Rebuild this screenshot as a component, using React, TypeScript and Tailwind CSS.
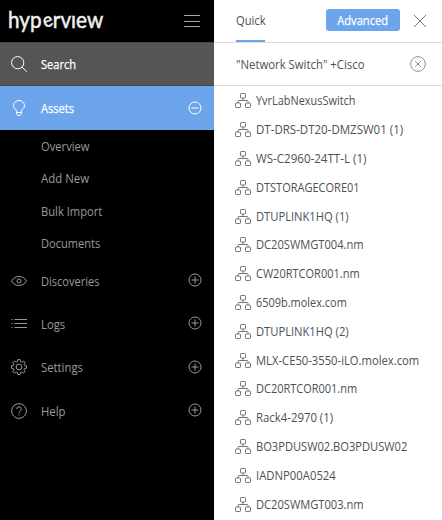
import type { ReactNode } from "react";

const results: [string, string][] = [
  ["YvrLabNexusSwitch", "scale-x-[0.84]"],
  ["DT-DRS-DT20-DMZSW01 (1)", "scale-x-[0.885]"],
  ["WS-C2960-24TT-L (1)", "scale-x-[0.89]"],
  ["DTSTORAGECORE01", "scale-x-[0.847]"],
  ["DTUPLINK1HQ (1)", "scale-x-[0.86]"],
  ["DC20SWMGT004.nm", "scale-x-[0.857]"],
  ["CW20RTCOR001.nm", "scale-x-[0.848]"],
  ["6509b.molex.com", "scale-x-[0.842]"],
  ["DTUPLINK1HQ (2)", "scale-x-[0.86]"],
  ["MLX-CE50-3550-iLO.molex.com", "scale-x-[0.864]"],
  ["DC20RTCOR001.nm", "scale-x-[0.845]"],
  ["Rack4-2970 (1)", "scale-x-[0.874]"],
  ["BO3PDUSW02.BO3PDUSW02", "scale-x-[0.856]"],
  ["IADNP00A0524", "scale-x-[0.87]"],
  ["DC20SWMGT003.nm", "scale-x-[0.857]"],
];

function Icon({ size = 16, className = "", children }: { size?: number; className?: string; children: ReactNode }) {
  return (
    <svg width={size} height={size} viewBox={`0 0 ${size} ${size}`} fill="none" stroke="currentColor" strokeWidth="1" className={`shrink-0 ${className}`}>
      {children}
    </svg>
  );
}

function Label({ text, fit }: { text: string; fit: string }) {
  return <span className={`origin-left whitespace-nowrap ${fit}`}>{text}</span>;
}

function Toggle({ open = false }: { open?: boolean }) {
  return (
    <Icon size={14} className="mr-3 mb-px ml-auto">
      <circle cx="7" cy="7" r="6" />
      <path d="M3.500 7h7" />
      {!open && <path d="M7 3.500v7" />}
    </Icon>
  );
}

function NavRow({ icon, text, fit }: { icon: ReactNode; text: string; fit: string }) {
  return (
    <div className="flex h-[43.3px] items-center pl-[11px] text-[#999999]">
      {icon}
      <div className="ml-[14px] flex">
        <Label text={text} fit={fit} />
      </div>
      <Toggle />
    </div>
  );
}

function Sitemap() {
  return (
    <Icon className="text-[#70767c]">
      <rect x="5.500" y="1.500" width="5" height="4.500" rx="0.7" />
      <rect x="0.500" y="11" width="5" height="4.500" rx="0.7" />
      <rect x="10.500" y="11" width="5" height="4.500" rx="0.7" />
      <path d="M8 6v2.500M3 11V9.500Q3 8.500 4 8.500h8Q13 8.500 13 9.500V11" />
    </Icon>
  );
}

export default function App() {
  return (
    <div className="flex h-[520px] w-[442px] overflow-hidden bg-white font-['Open_Sans','Noto_Sans',sans-serif] text-[13px] leading-[18px]">
      <nav className="w-[214px] shrink-0 bg-black">
        <div className="flex h-[42px] items-center pl-[8px] text-white">
          <div className="mb-[4px] w-[95px] font-['Lato',sans-serif] text-[23px] leading-[36px] text-[#f0f0f0] [-webkit-text-stroke:0.5px_#f0f0f0]">
            <span className="inline-block origin-left scale-x-[0.9] whitespace-nowrap" aria-label="hyperview">
              hyp<span className="relative -top-px mx-px inline-block -rotate-[20deg] text-[20px] leading-[16px]">e</span>rvıew
            </span>
          </div>
          <Icon className="mr-[14px] ml-auto text-[#a8a8a8]">
            <path d="M0 2.500h16M0 8.500h16M0 13.500h16" />
          </Icon>
        </div>
        <div className="flex h-[44px] items-center border-y border-[#484848] bg-[#555555] pl-[11px] font-medium text-white">
          <Icon>
            <circle cx="6.700" cy="6.700" r="6.100" />
            <path d="M11 11l4.800 4.800" />
          </Icon>
          <div className="ml-[14px] flex [-webkit-text-stroke:0.25px_white]">
            <Label text="Search" fit="scale-x-[0.85]" />
          </div>
        </div>
        <div className="flex h-11 items-center bg-[#6ca5ec] pl-[11px] font-medium text-white">
          <Icon>
            <path d="M5.600 12.500v-1.200C5.600 9.200 2.500 8.600 2.500 5.700a5.500 5.200 0 0 1 11 0c0 2.900-3.100 3.500-3.100 5.600v1.200zM5.600 12.500v1.300l1.200 1.700h2.400l1.200-1.700v-1.300" />
          </Icon>
          <div className="ml-[14px] flex [-webkit-text-stroke:0.25px_white]">
            <Label text="Assets" fit="scale-x-[0.85]" />
          </div>
          <Toggle open />
        </div>
        <div className="grid h-[129px] grid-rows-4 items-center pl-[41px] text-[#999999]">
          <Label text="Overview" fit="scale-x-[0.86]" />
          <Label text="Add New" fit="scale-x-[0.88]" />
          <Label text="Bulk Import" fit="scale-x-[0.86]" />
          <Label text="Documents" fit="scale-x-[0.85]" />
        </div>
        <NavRow
          text="Discoveries"
          fit="scale-x-[0.85]"
          icon={
            <Icon>
              <path d="M.5 8C2.500 4.800 5 3.500 8 3.500s5.500 1.300 7.500 4.500c-2 3.200-4.500 4.500-7.500 4.500S2.500 11.200.5 8z" />
              <circle cx="8" cy="8" r="2" />
            </Icon>
          }
        />
        <NavRow
          text="Logs"
          fit="scale-x-[0.87]"
          icon={
            <Icon>
              <path d="M3.500 3.500H16M3.500 7.500H16M3.500 11.500H16M.5 3.500h1.200M.5 7.500h1.200M.5 11.500h1.200" />
            </Icon>
          }
        />
        <NavRow
          text="Settings"
          fit="scale-x-[0.87]"
          icon={
            <Icon>
              <path d="M6.800.6h2.400l.4 2 1.300.5 1.700-1.100 1.500 1.500L13 5.200l.5 1.200 2 .4v2.400l-2 .4-.5 1.300 1.100 1.700-1.500 1.500-1.700-1.100-1.300.5-.4 2H6.800l-.4-2-1.300-.5-1.700 1.100-1.500-1.500L3 10.900l-.5-1.300-2-.4V6.800l2-.4L3 5.200 1.900 3.500 3.400 2l1.700 1.100 1.300-.5z" />
              <circle cx="8" cy="8" r="2.900" />
            </Icon>
          }
        />
        <NavRow
          text="Help"
          fit="scale-x-[0.87]"
          icon={
            <Icon>
              <circle cx="8" cy="8" r="7.400" />
              <path d="M5.700 6.200a2.300 2.200 0 1 1 3.500 1.800Q8 8.700 8 10M8 11.200v1.200" />
            </Icon>
          }
        />
      </nav>

      <main className="min-w-0 flex-1 text-[#4b5157]">
        <div className="flex h-[43px] border-b border-[#dcdcdc] pl-[22px]">
          <div className="flex h-[42px] w-[29px] items-center border-b-2 border-[#6ca5ec]">
            <Label text="Quick" fit="scale-x-[0.86]" />
          </div>
          <button className="mt-[9px] ml-[61px] flex h-[22px] w-[74px] items-center justify-center rounded-[3px] bg-[#6ca5ec] font-medium text-white [-webkit-text-stroke:0.25px_white]">
            <span className="scale-x-[0.86] pb-px">Advanced</span>
          </button>
          <Icon size={14} className="mt-[14px] ml-[13px] text-[#777777]">
            <path d="M1 1l12 12M13 1L1 13" />
          </Icon>
        </div>
        <div className="flex h-[43px] items-center border-b border-[#dcdcdc] pl-[22px]">
          <Label text={'"Network Switch" +Cisco'} fit="scale-x-[0.872]" />
          <Icon className="mr-4 ml-auto text-[#87919b]">
            <circle cx="8" cy="8" r="7.400" />
            <path d="M5.200 5.200l5.600 5.600M10.800 5.200l-5.600 5.600" />
          </Icon>
        </div>
        <ul>
          {results.map(([text, fit]) => (
            <li key={text} className="flex h-[28.8px] items-center gap-[5px] pl-[21px]">
              <Sitemap />
              <Label text={text} fit={fit} />
            </li>
          ))}
        </ul>
      </main>
    </div>
  );
}
